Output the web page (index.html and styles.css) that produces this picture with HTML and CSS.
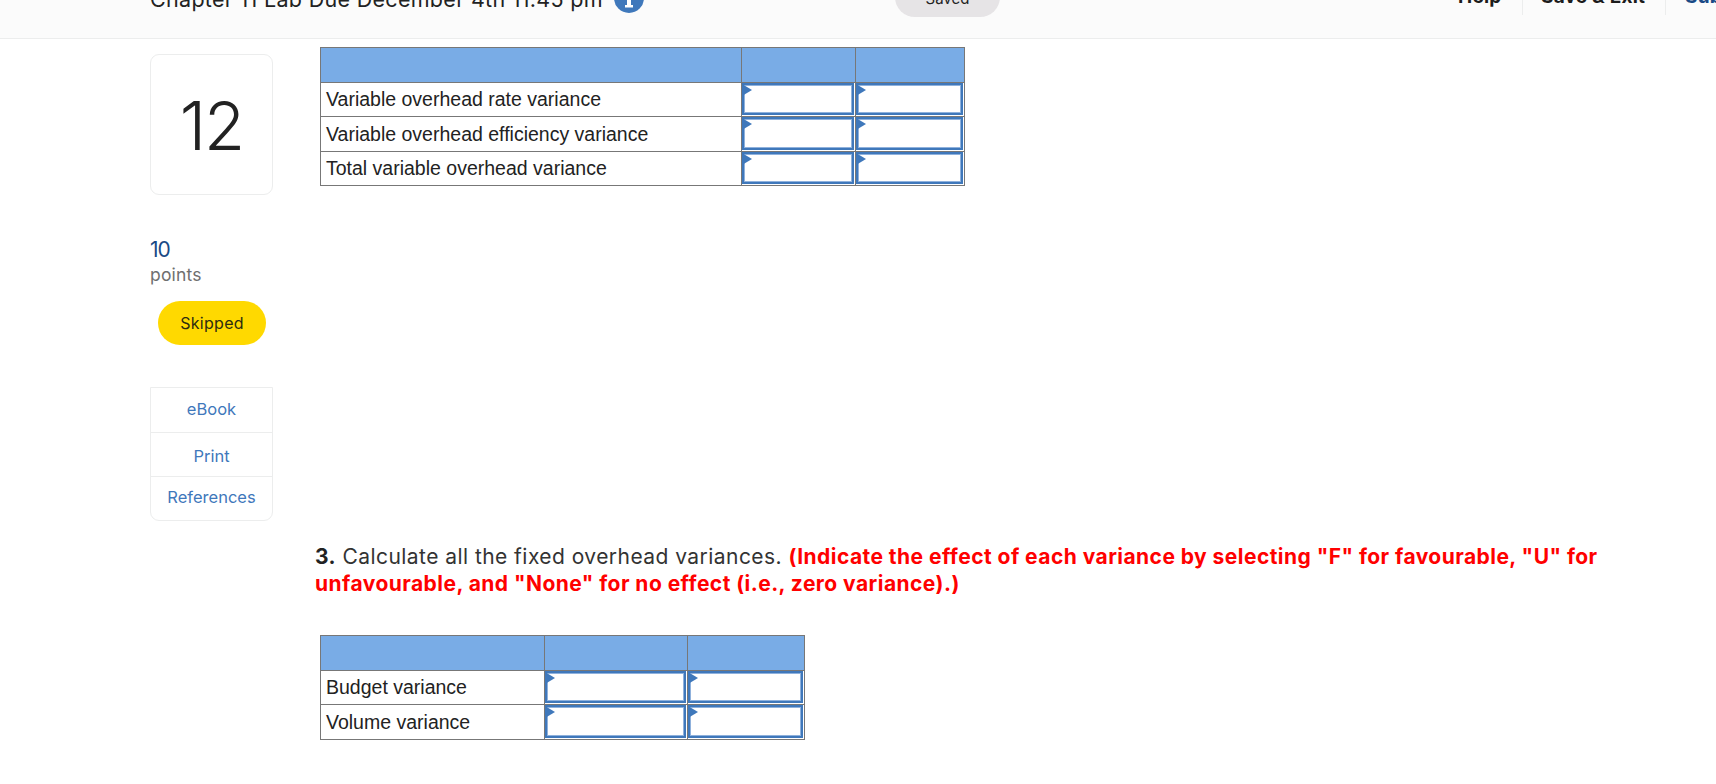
FILE: index.html
```html
<!DOCTYPE html>
<html lang="en">
<head>
<meta charset="utf-8">
<title>Chapter 11 Lab</title>
<link rel="stylesheet" href="styles.css">
</head>
<body>
<header class="topbar">
  <div class="title-group">
    <span class="title">Chapter 11 Lab Due December 4th 11:45 pm</span>
    <svg class="info" viewBox="0 0 30 30" aria-hidden="true"><circle cx="15" cy="15" r="15" fill="#3f78bb"/><rect x="12.8" y="6" width="4.4" height="4" fill="#fff"/><path d="M11 13h6v9h2v2.5h-8V22h2v-6.500h-2z" fill="#fff"/></svg>
  </div>
  <div class="saved"><span>Saved</span></div>
  <nav class="actions">
    <span class="action help">Help</span>
    <span class="action exit">Save &amp; Exit</span>
    <span class="action submit">Submit</span>
  </nav>
</header>
<main class="page">
  <aside class="side">
    <div class="qnum">12</div>
    <div class="points"><div class="pts-num">10</div><div class="pts-label">points</div></div>
    <div class="skipped">Skipped</div>
    <ul class="tools">
      <li class="tool-a">eBook</li>
      <li class="tool-b">Print</li>
      <li class="tool-c">References</li>
    </ul>
  </aside>
  <section class="content">
    <table class="grid first">
      <tr class="head"><td class="lab"></td><td class="c1"></td><td class="c2"></td></tr>
      <tr class="r1"><td class="lab">Variable overhead rate variance</td><td class="inp"><div class="box"></div></td><td class="inp"><div class="box"></div></td></tr>
      <tr class="r2"><td class="lab">Variable overhead efficiency variance</td><td class="inp"><div class="box"></div></td><td class="inp"><div class="box"></div></td></tr>
      <tr class="r1"><td class="lab">Total variable overhead variance</td><td class="inp"><div class="box"></div></td><td class="inp"><div class="box"></div></td></tr>
    </table>
    <p class="prompt"><b>3.</b> Calculate all the fixed overhead variances. <strong>(Indicate the effect of each variance by selecting "F" for favourable, "U" for unfavourable, and "None" for no effect (i.e., zero variance).)</strong></p>
    <table class="grid second">
      <tr class="head"><td class="lab"></td><td class="c1"></td><td class="c2"></td></tr>
      <tr class="r1"><td class="lab">Budget variance</td><td class="inp"><div class="box"></div></td><td class="inp"><div class="box"></div></td></tr>
      <tr class="r2"><td class="lab">Volume variance</td><td class="inp"><div class="box"></div></td><td class="inp"><div class="box"></div></td></tr>
    </table>
  </section>
</main>
</body>
</html>
```

FILE: styles.css
```css
* { box-sizing: border-box; }
html, body { margin: 0; height: 784px; overflow: hidden; background: #fff; }
body { font-family: Inter, Lato, sans-serif; color: #222; }

.topbar { height: 39px; background: #fbfbfb; border-bottom: 1px solid #eceded; position: relative; overflow: hidden; display: flex; }
.title-group { display: flex; align-items: center; gap: 11px; margin: -26px 0 0 150px; height: 50px; }
.title { font-size: 21.5px; letter-spacing: 0.3px; color: #222; white-space: nowrap; }
.info { width: 30px; height: 30px; margin-bottom: 2px; }
.saved { position: absolute; left: 895px; top: -30px; width: 105px; height: 47px; border-radius: 20px; background: #e6e4e6; display: flex; align-items: flex-end; justify-content: center; font-size: 15px; line-height: 1; padding-bottom: 11px; }
.actions { position: absolute; left: 1458px; top: -20px; height: 35px; display: flex; }
.action { font-weight: 700; font-size: 19px; letter-spacing: 0.2px; color: #1c1c1c; white-space: nowrap; height: 35px; display: flex; align-items: flex-end; line-height: 1; padding-bottom: 9px; }
.help { width: 65px; border-right: 1px solid #eceded; }
.exit { width: 143px; padding-left: 18px; border-right: 1px solid #eceded; }
.submit { color: #1a4a86; padding-left: 19px; }

.page { display: flex; padding-left: 150px; }
.side { width: 123px; padding-top: 15px; }
.qnum { width: 123px; height: 141px; border: 1px solid #eceded; border-radius: 9px; display: flex; align-items: center; justify-content: center; padding-top: 2px; font-size: 67px; letter-spacing: -2px; color: #222; font-weight: 300; }
.points { margin-top: 41px; }
.pts-num { font-size: 21px; line-height: 27px; color: #1a4a86; letter-spacing: -1px; }
.pts-label { font-size: 17.5px; letter-spacing: 0.2px; line-height: 24px; color: #6f6f6f; }
.skipped { margin: 14px 0 0 8px; width: 108px; height: 44px; border-radius: 22px; background: #ffd900; display: flex; align-items: center; justify-content: center; font-size: 16px; letter-spacing: 0.3px; color: #2c2c10; }
.tools { list-style: none; margin: 42px 0 0; padding: 0; border: 1px solid #eceded; border-radius: 0 0 9px 9px; font-size: 16.5px; color: #3f78bb; text-align: center; }
.tools li { display: flex; align-items: center; justify-content: center; }
.tool-a { height: 45px; padding-bottom: 3px; border-bottom: 1px solid #eceded; }
.tool-b { height: 44px; padding-top: 3px; border-bottom: 1px solid #eceded; }
.tool-c { height: 43px; padding-bottom: 3px; }

.content { margin-left: 47px; padding-top: 8px; }
.grid { border-collapse: collapse; border: 1px solid #777; font-family: "Liberation Sans", Arial, sans-serif; font-size: 19.5px; color: #222; table-layout: fixed; }
.grid td { border: 1px solid #777; padding: 0; }
.grid td.lab { padding-left: 5px; }
.head td { background: #79ace6; height: 35px; }
.r1 td { height: 34px; }
.r2 td { height: 35px; }
.first { width: 644px; }
.first .lab { width: 421px; }
.first .c1 { width: 114px; }
.first .c2 { width: 109px; }
.second { width: 484px; margin-top: 38px; }
.second .lab { width: 224px; }
.second .c1 { width: 143px; }
.second .c2 { width: 117px; }
.grid td.inp { padding: 0 1px 1px 0; }
.box { height: 100%; min-height: 32px; border: 2px solid #3f78bb; box-shadow: inset 0 0 0 1px #8fb1dc; position: relative; background: #fff; }
.box::before { content: ""; position: absolute; left: -2px; top: -1px; border-left: 10px solid #3f78bb; border-top: 6px solid transparent; border-bottom: 6px solid transparent; }

.prompt { width: 1290px; margin: 357px 0 0 -5px; font-size: 21px; letter-spacing: 0.45px; line-height: 27px; color: #333; }
.prompt b { color: #222; }
.prompt strong { color: #f00; }
```
